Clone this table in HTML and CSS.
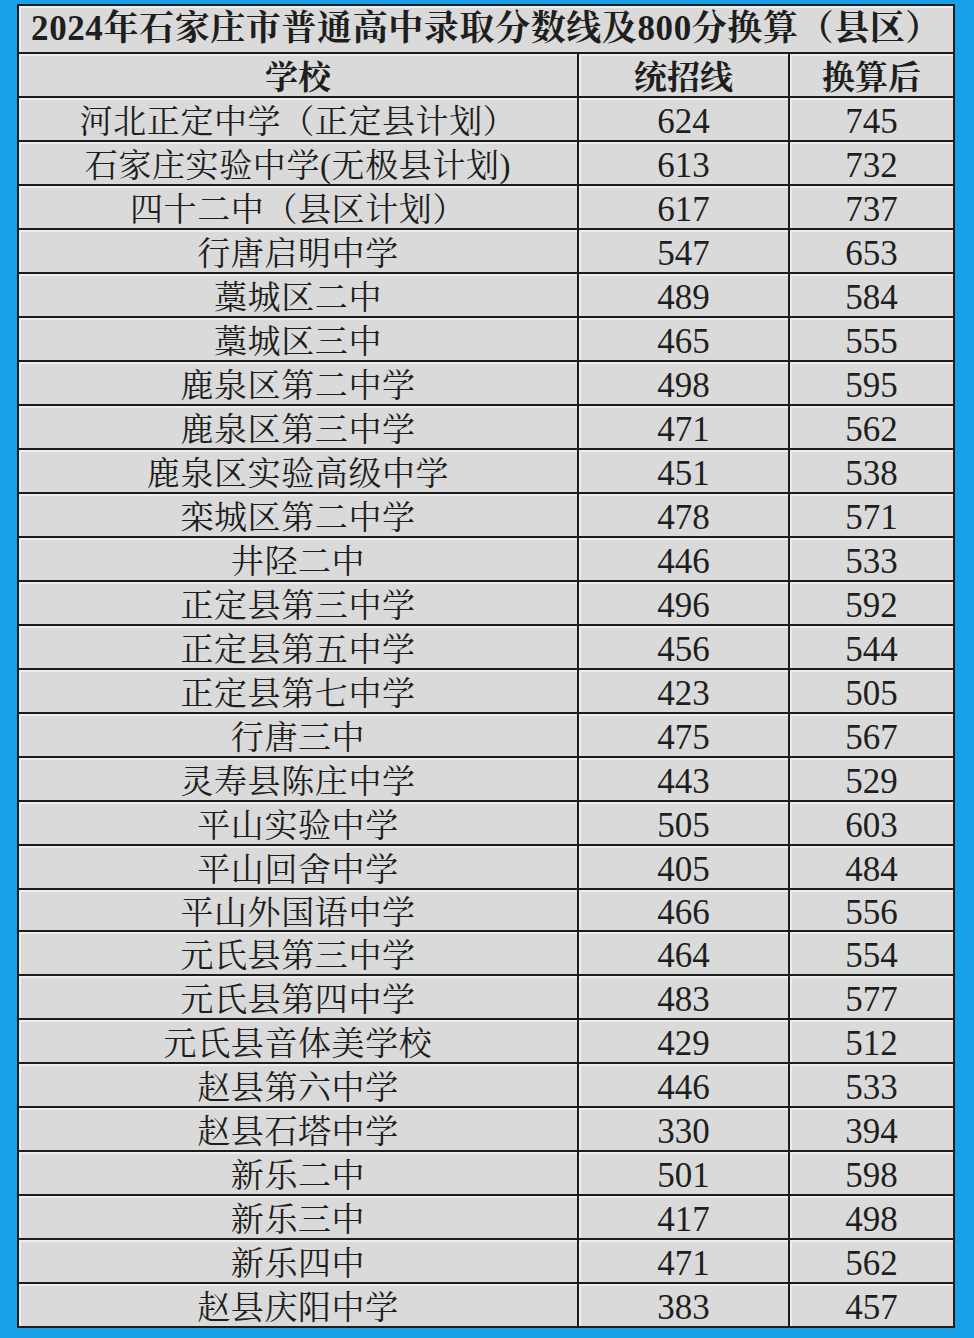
FILE: index.html
```html
<!DOCTYPE html>
<html lang="zh-CN">
<head>
<meta charset="utf-8">
<title>2024年石家庄市普通高中录取分数线及800分换算（县区）</title>
<link rel="stylesheet" href="styles.css">
</head>
<body>
<div class="sheet">
<table class="scores">
<colgroup><col class="c-school"><col class="c-line"><col class="c-conv"></colgroup>
<thead>
<tr class="title-row"><th colspan="3" class="title">2024年石家庄市普通高中录取分数线及800分换算（县区）</th></tr>
<tr class="head-row"><th>学校</th><th>统招线</th><th>换算后</th></tr>
</thead>
<tbody>
<tr><td>河北正定中学（正定县计划）</td><td class="num">624</td><td class="num">745</td></tr>
<tr><td>石家庄实验中学(无极县计划)</td><td class="num">613</td><td class="num">732</td></tr>
<tr><td>四十二中（县区计划）</td><td class="num">617</td><td class="num">737</td></tr>
<tr><td>行唐启明中学</td><td class="num">547</td><td class="num">653</td></tr>
<tr><td>藁城区二中</td><td class="num">489</td><td class="num">584</td></tr>
<tr><td>藁城区三中</td><td class="num">465</td><td class="num">555</td></tr>
<tr><td>鹿泉区第二中学</td><td class="num">498</td><td class="num">595</td></tr>
<tr><td>鹿泉区第三中学</td><td class="num">471</td><td class="num">562</td></tr>
<tr><td>鹿泉区实验高级中学</td><td class="num">451</td><td class="num">538</td></tr>
<tr><td>栾城区第二中学</td><td class="num">478</td><td class="num">571</td></tr>
<tr><td>井陉二中</td><td class="num">446</td><td class="num">533</td></tr>
<tr><td>正定县第三中学</td><td class="num">496</td><td class="num">592</td></tr>
<tr><td>正定县第五中学</td><td class="num">456</td><td class="num">544</td></tr>
<tr><td>正定县第七中学</td><td class="num">423</td><td class="num">505</td></tr>
<tr><td>行唐三中</td><td class="num">475</td><td class="num">567</td></tr>
<tr><td>灵寿县陈庄中学</td><td class="num">443</td><td class="num">529</td></tr>
<tr><td>平山实验中学</td><td class="num">505</td><td class="num">603</td></tr>
<tr><td>平山回舍中学</td><td class="num">405</td><td class="num">484</td></tr>
<tr class="short"><td>平山外国语中学</td><td class="num">466</td><td class="num">556</td></tr>
<tr class="seam"><td>元氏县第三中学</td><td class="num">464</td><td class="num">554</td></tr>
<tr><td>元氏县第四中学</td><td class="num">483</td><td class="num">577</td></tr>
<tr><td>元氏县音体美学校</td><td class="num">429</td><td class="num">512</td></tr>
<tr><td>赵县第六中学</td><td class="num">446</td><td class="num">533</td></tr>
<tr><td>赵县石塔中学</td><td class="num">330</td><td class="num">394</td></tr>
<tr><td>新乐二中</td><td class="num">501</td><td class="num">598</td></tr>
<tr><td>新乐三中</td><td class="num">417</td><td class="num">498</td></tr>
<tr><td>新乐四中</td><td class="num">471</td><td class="num">562</td></tr>
<tr><td>赵县庆阳中学</td><td class="num">383</td><td class="num">457</td></tr>
</tbody>
</table>
</div>
</body>
</html>
```

FILE: styles.css
```css
html, body {
  margin: 0;
  padding: 0;
  background: #17a1e6;
}

body {
  width: 974px;
  height: 1338px;
  overflow: hidden;
}

.sheet {
  padding: 4px 21px 0 17px;
}

.scores {
  width: 936px;
  border-collapse: collapse;
  table-layout: fixed;
  border: 2px solid #1c1c1c;
  font-family: "Liberation Serif", "Noto Serif CJK SC", "Noto Sans CJK SC", serif;
  color: #1e1e1e;
}

.c-school { width: 560px; }
.c-line { width: 211px; }
.c-conv { width: 165px; }

.scores th,
.scores td {
  border: 2px solid #1c1c1c;
  background: #dadada;
  box-shadow: inset 2px 2px 0 #eeeeee;
  text-align: center;
  padding: 0;
  overflow: hidden;
  white-space: nowrap;
}

.title-row { height: 48px; }

.title {
  font-size: 35px;
  font-weight: 700;
  letter-spacing: 0.6px;
  line-height: 36px;
  padding-top: 8px;
}

.head-row { height: 44px; }

.head-row th {
  font-size: 33px;
  font-weight: 700;
  line-height: 34px;
  padding-top: 6px;
}

.scores tbody tr { height: 44px; }

.scores td {
  font-size: 33px;
  font-weight: 400;
  letter-spacing: 0.6px;
  line-height: 34px;
  padding-top: 6px;
}

.scores td.num {
  font-family: "Liberation Serif", "Times New Roman", serif;
  font-size: 35px;
  letter-spacing: 0;
}

.scores tr.short { height: 41px; }

.scores tr.seam td {
  border-top-color: #4f7d76;
  background: #d9dbd9;
}
```
